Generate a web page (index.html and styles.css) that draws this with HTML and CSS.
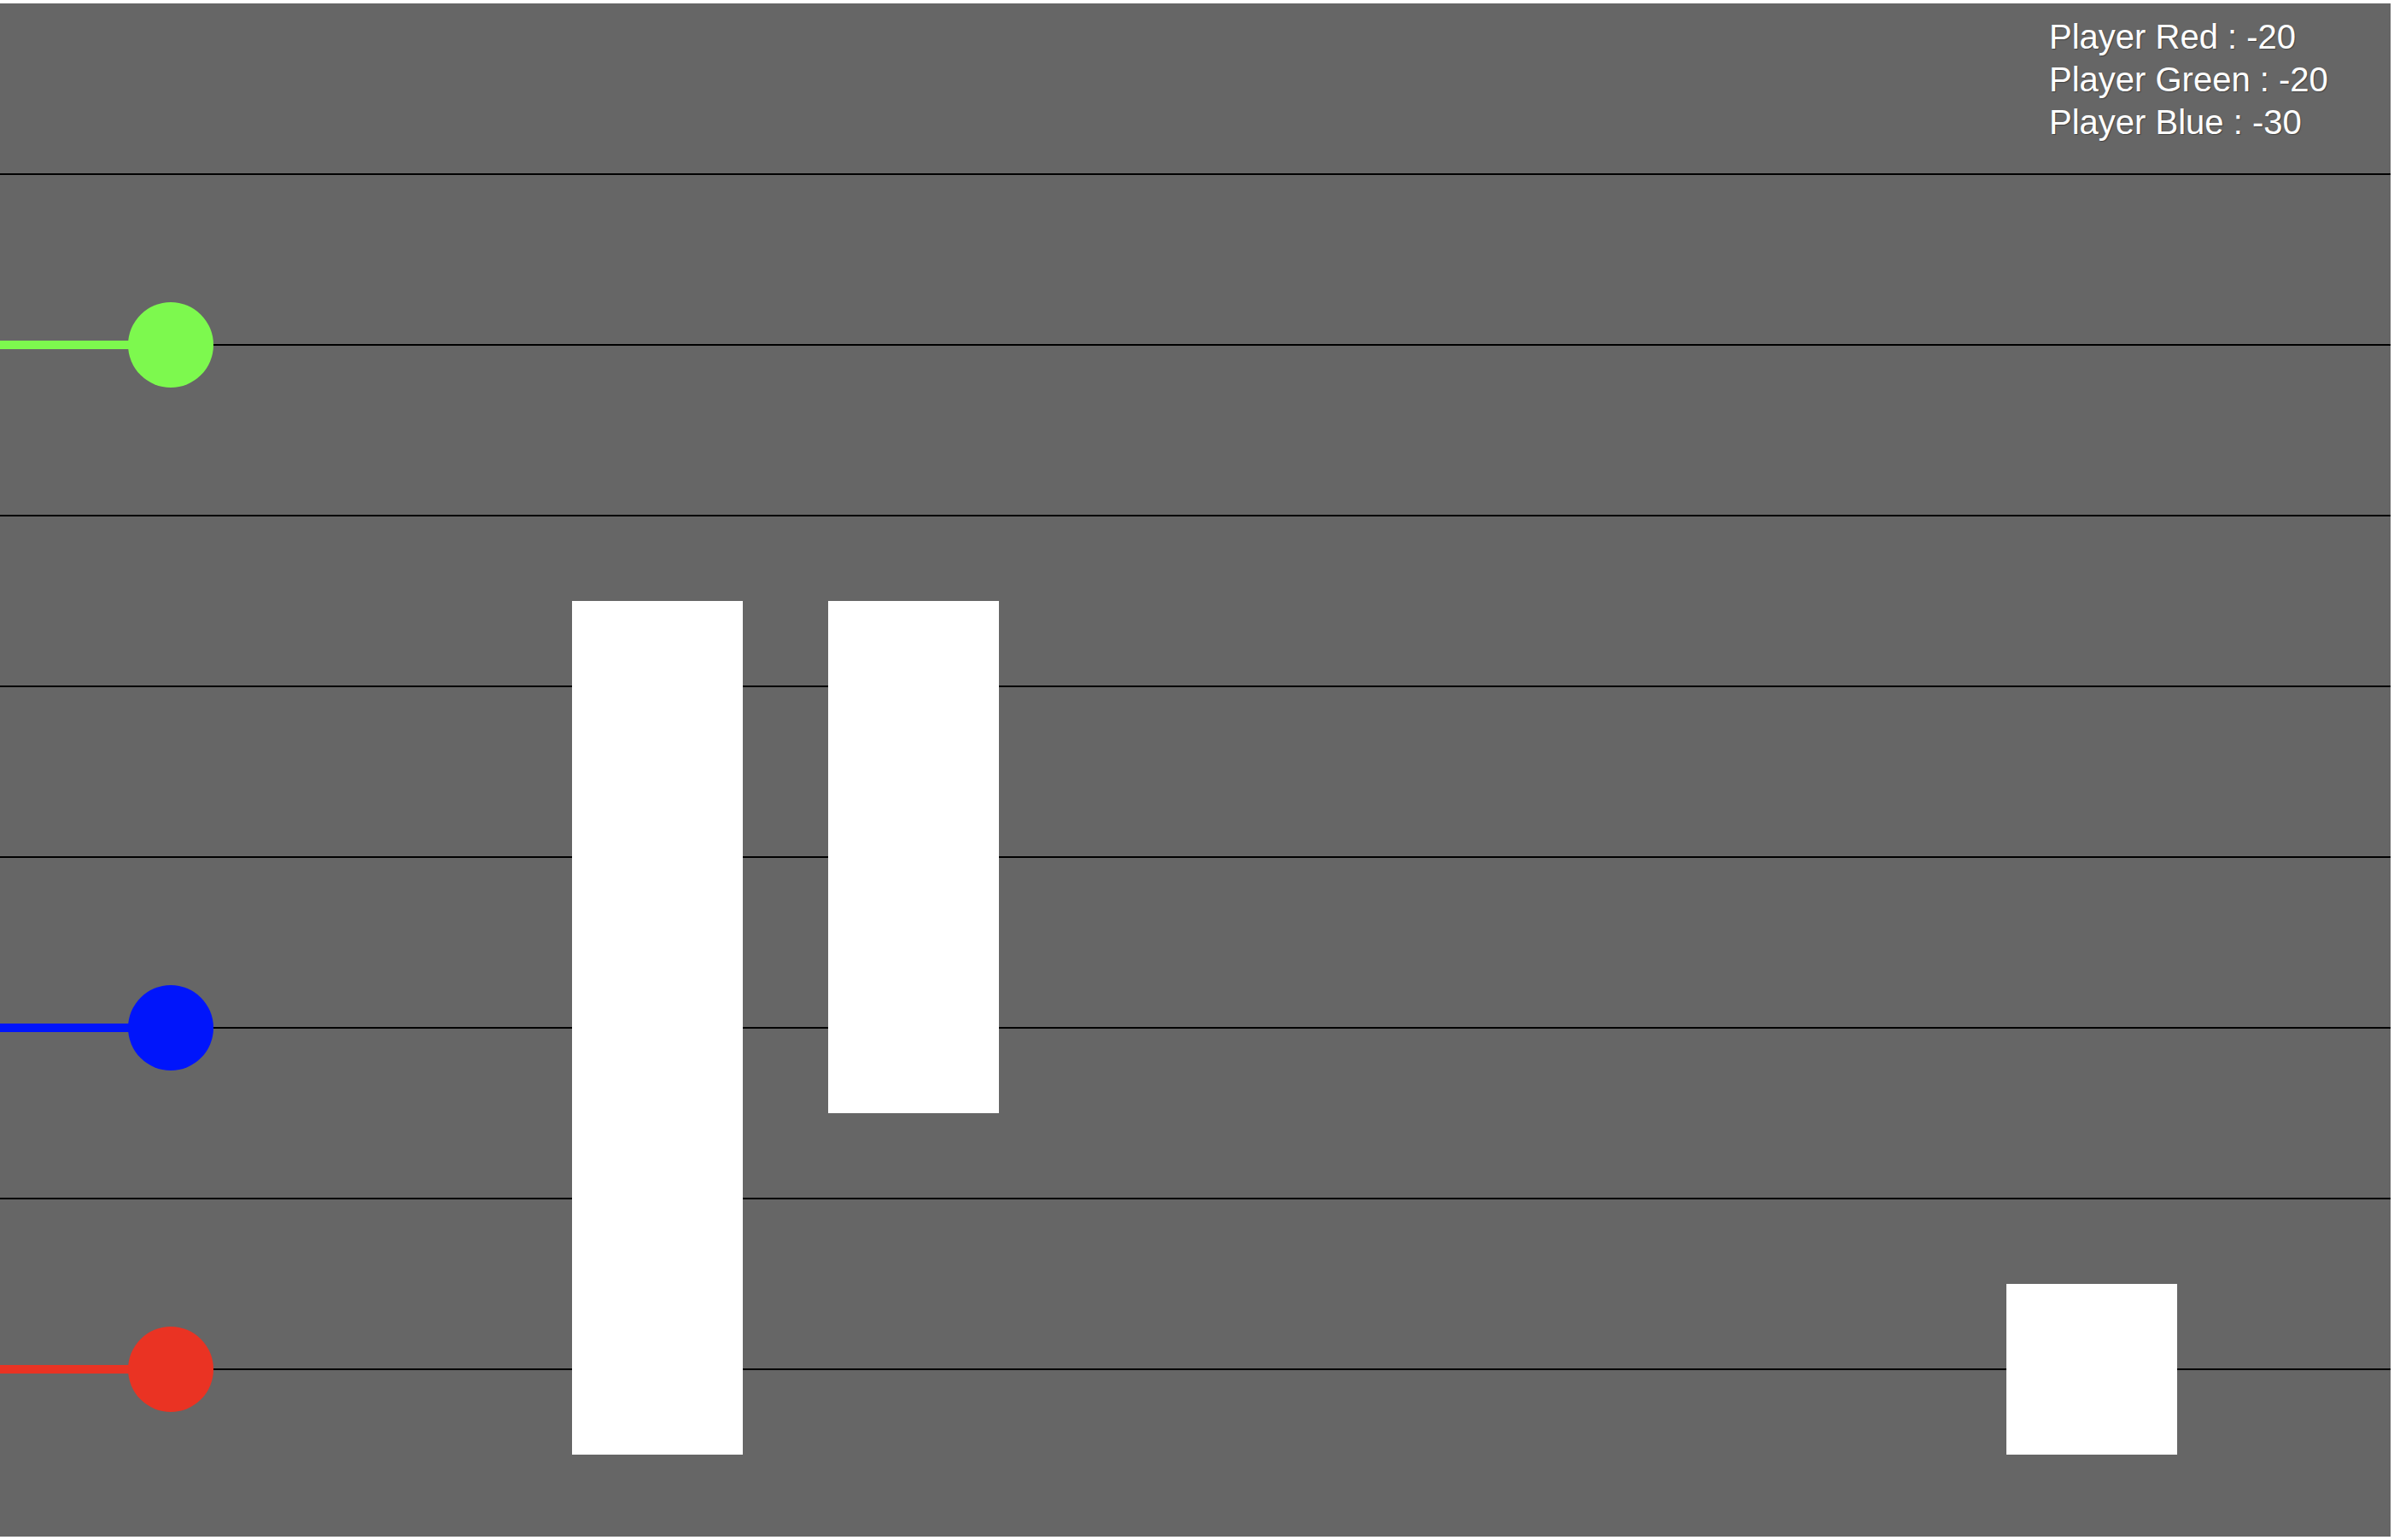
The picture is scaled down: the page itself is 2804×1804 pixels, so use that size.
FILE: index.html
```html
<!DOCTYPE html>
<html>
<head>
<meta charset="utf-8">
<title>Lanes</title>
<link rel="stylesheet" href="styles.css">
</head>
<body>
<div class="board">
  <div class="lanes">
    <div class="lane lane-first"></div>
    <div class="lane"></div>
    <div class="lane"></div>
    <div class="lane"></div>
    <div class="lane"></div>
    <div class="lane"></div>
    <div class="lane"></div>
    <div class="lane"></div>
    <div class="lane"></div>
  </div>

  <div class="trail trail-green"></div>
  <div class="trail trail-blue"></div>
  <div class="trail trail-red"></div>
  <div class="player player-green"></div>
  <div class="player player-blue"></div>
  <div class="player player-red"></div>

  <div class="block block-a"></div>
  <div class="block block-b"></div>
  <div class="block block-c"></div>

  <div class="scores">
    <div class="score">Player Red : -20</div>
    <div class="score">Player Green : -20</div>
    <div class="score">Player Blue : -30</div>
  </div>
</div>
</body>
</html>
```

FILE: styles.css
```css
html, body {
  margin: 0;
  padding: 0;
  background: #ffffff;
}

body {
  padding-top: 4px;
}

.board {
  position: relative;
  width: 2800px;
  height: 1796px;
  background: #666666;
  overflow: hidden;
}

.lanes {
  display: flex;
  flex-direction: column;
}

.lane {
  box-sizing: border-box;
  height: 200px;
  border-top: 2px solid #000000;
  flex-shrink: 0;
}

.lane-first {
  height: 199px;
  border-top: none;
}

.trail {
  position: absolute;
  left: 0;
  width: 200px;
  height: 10px;
}

.trail-green { top: 395px; background: #7df94e; }
.trail-blue  { top: 1195px; background: #0015fb; }
.trail-red   { top: 1595px; background: #ea3323; }

.player {
  position: absolute;
  left: 150px;
  width: 100px;
  height: 100px;
  border-radius: 50%;
}

.player-green { top: 350px; background: #7df94e; }
.player-blue  { top: 1150px; background: #0015fb; }
.player-red   { top: 1550px; background: #ea3323; }

.block {
  position: absolute;
  background: #ffffff;
  width: 200px;
}

.block-a { left: 670px; top: 700px; height: 1000px; }
.block-b { left: 970px; top: 700px; height: 600px; }
.block-c { left: 2350px; top: 1500px; height: 200px; }

.scores {
  position: absolute;
  left: 2400px;
  top: 14px;
  display: flex;
  flex-direction: column;
  font-family: "Liberation Sans", Arial, sans-serif;
  font-size: 40px;
  line-height: 50px;
  color: #ffffff;
  text-shadow: 1px 1px 1px rgba(0, 0, 0, 0.35);
  white-space: nowrap;
}
```
